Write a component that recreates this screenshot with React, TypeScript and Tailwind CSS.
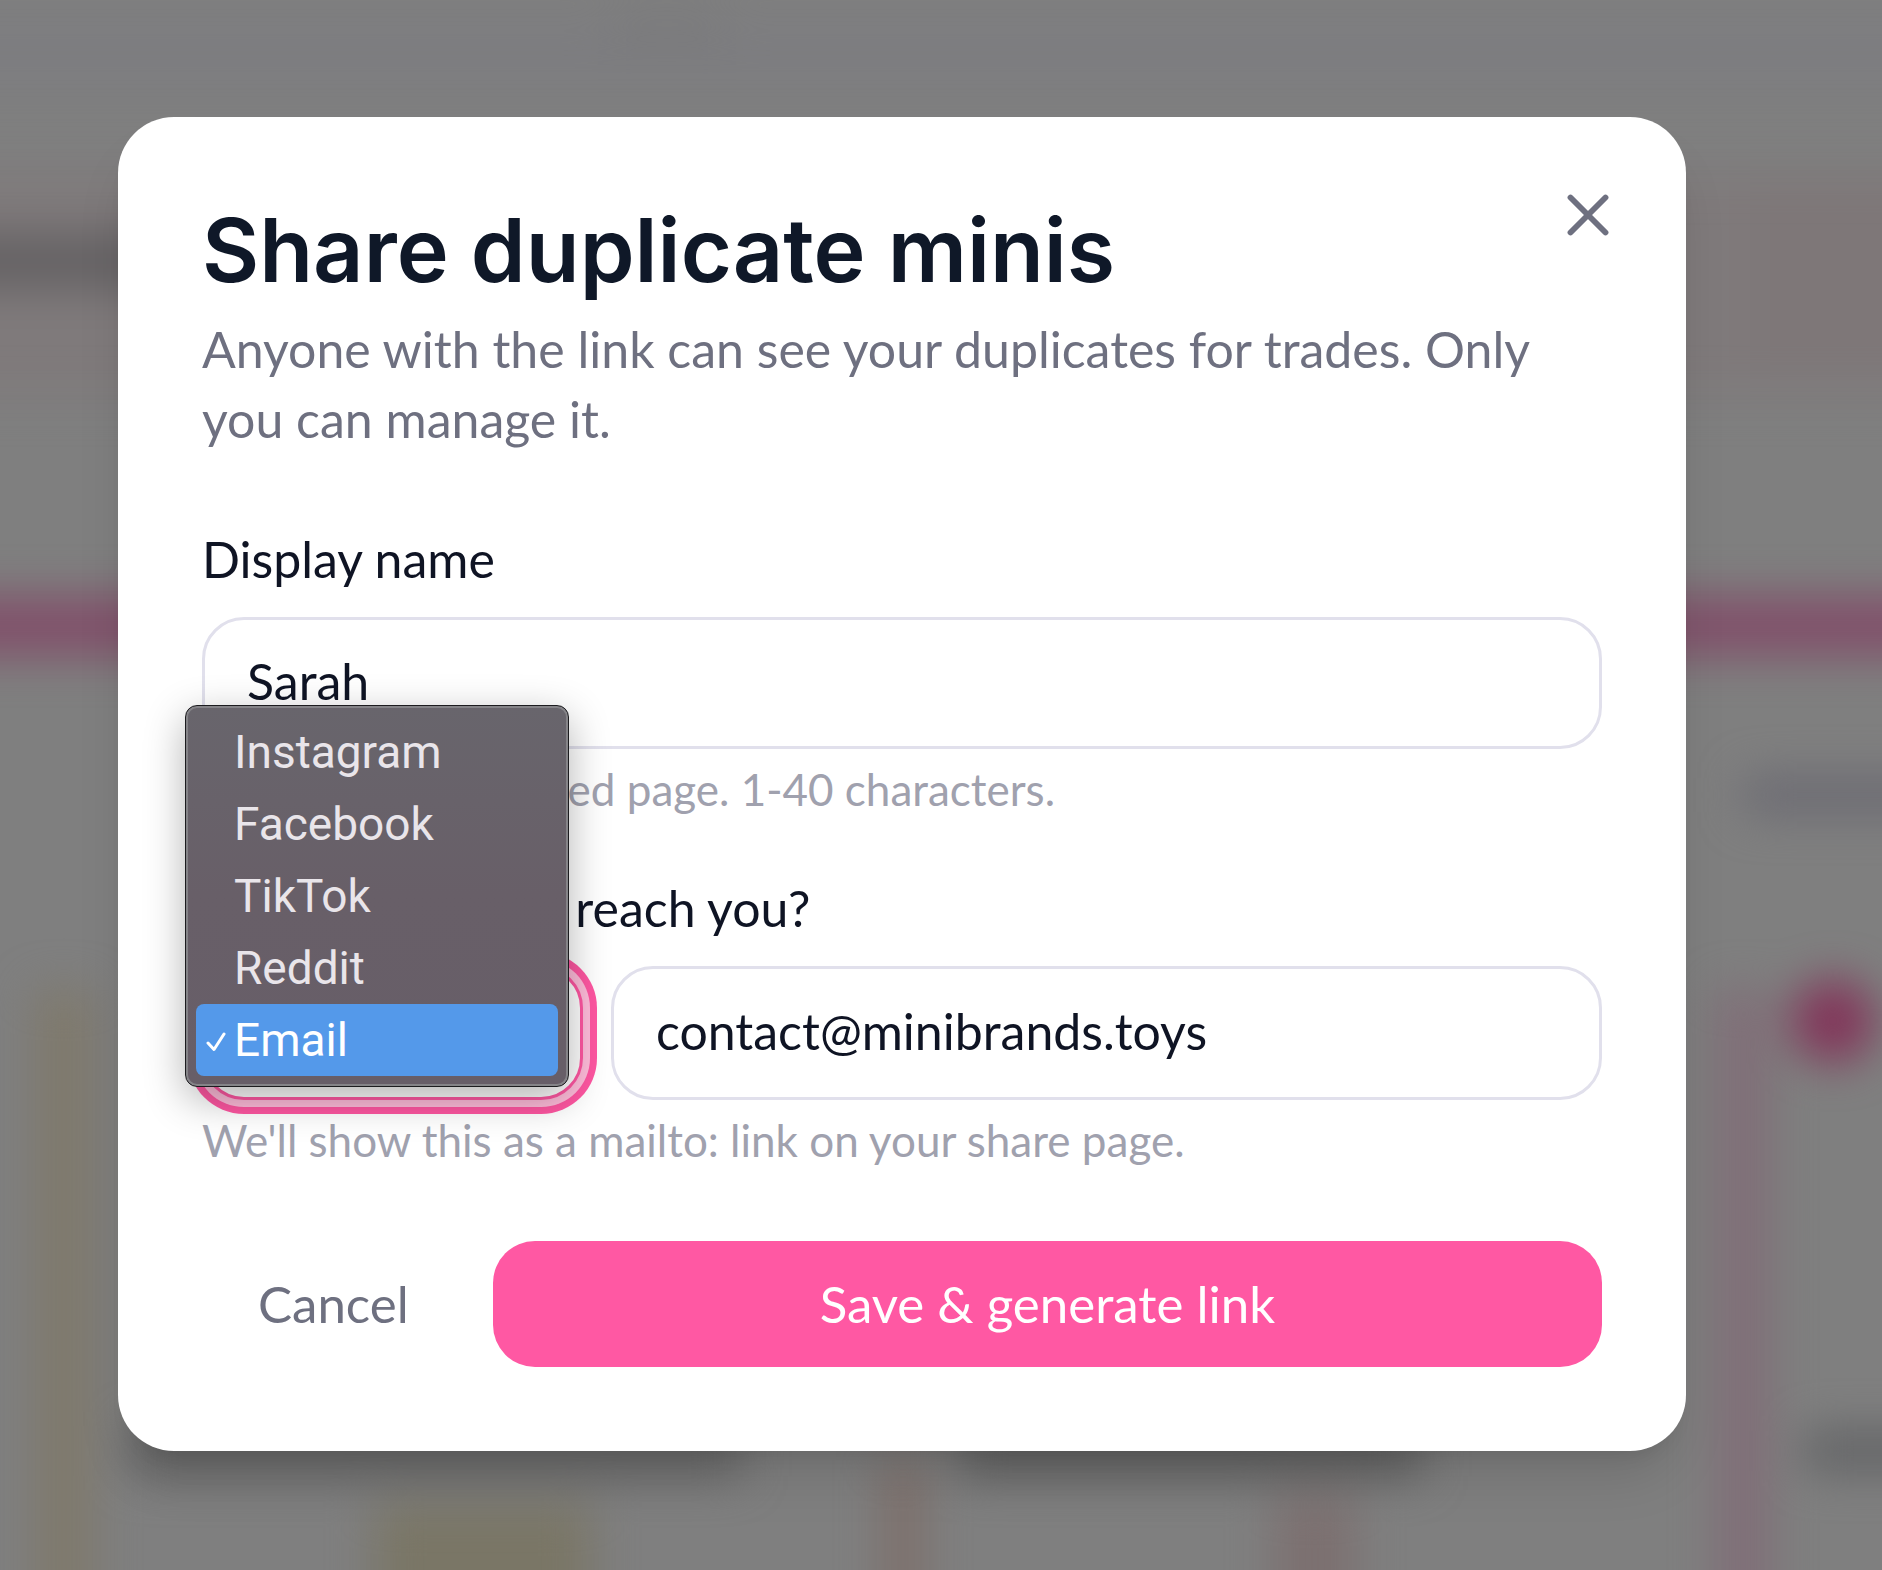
import { useState } from "react";
import { X } from "lucide-react";

const CONTACT_TYPES = ["Instagram", "Facebook", "TikTok", "Reddit", "Email"];

function Backdrop() {
    return (
        <svg
            aria-hidden="true"
            className="absolute inset-0 h-full w-full"
            viewBox="0 0 1882 1570"
            preserveAspectRatio="xMidYMid slice"
        >
            <defs>
                <filter id="soft" filterUnits="userSpaceOnUse" x="-200" y="-200" width="2300" height="2000" colorInterpolationFilters="sRGB">
                    <feGaussianBlur stdDeviation="22" />
                </filter>
            </defs>
            <rect width="1882" height="1570" fill="#7f7f7f" />
            <g filter="url(#soft)">
                <rect x="-180" y="18" width="2250" height="70" fill="#7d7d80" />
                <rect x="612" y="12" width="110" height="40" fill="#7b7b7d" />

                {/* header card */}
                <rect x="-180" y="175" width="2250" height="220" fill="#7f7a7b" />
                <rect x="1750" y="180" width="300" height="190" fill="#7e7778" />
                <rect x="-180" y="234" width="360" height="54" fill="#646163" />

                {/* progress bar */}
                <rect x="-180" y="596" width="2250" height="60" fill="#81506a" />

                {/* card row */}
                <rect x="1745" y="776" width="300" height="38" fill="#6b6a72" />
                <rect x="36" y="990" width="56" height="700" fill="#7f796b" />
                <rect x="1718" y="990" width="50" height="700" fill="#806d77" />
                <circle cx="1833" cy="1021" r="42" fill="#82365a" />
                <rect x="1805" y="1430" width="260" height="42" fill="#636466" />
                <rect x="130" y="1426" width="610" height="50" fill="#666666" />
                <rect x="960" y="1426" width="460" height="50" fill="#606060" />
                <rect x="375" y="1504" width="215" height="150" fill="#7a7666" />
                <rect x="884" y="1460" width="38" height="200" fill="#7d6e69" />
                <rect x="1275" y="1496" width="80" height="150" fill="#7c7070" />
            </g>
        </svg>
    );
}

function ContactMenu({ value, onSelect }: { value: string; onSelect: (v: string) => void }) {
    return (
        <ul
            role="listbox"
            aria-label="Contact type"
            className="absolute bottom-[13px] -left-[17px] z-10 w-96 rounded-xl border border-[#1c1c1f] bg-linear-to-b from-[#68656c] via-[#685f68] to-[#675e68] p-[10px] font-['Roboto',sans-serif] text-[46px] text-[#e9e5ea] shadow-[inset_0_0_0_2px_#858488,0_12px_40px_rgba(0,0,0,0.3)]"
        >
            {CONTACT_TYPES.map((type) => (
                <li key={type} role="option" aria-selected={type === value}>
                    <button
                        type="button"
                        onClick={() => onSelect(type)}
                        className={
                            type === value
                                ? "flex h-[72px] w-full items-center rounded-lg bg-[#5499ea] pl-[10px] text-left text-white"
                                : "flex h-[72px] w-full items-center pl-[10px] text-left"
                        }
                    >
                        <span className="flex w-7 shrink-0">
                            {type === value && (
                                <svg viewBox="0 0 20 20" className="mt-1 h-5 w-5" fill="none" stroke="currentColor" strokeWidth="3" strokeLinecap="round" strokeLinejoin="round" aria-hidden="true">
                                    <path d="M2 11 L8 17.5 L18 2" />
                                </svg>
                            )}
                        </span>
                        {type}
                    </button>
                </li>
            ))}
        </ul>
    );
}

export default function App() {
    const [name, setName] = useState("Sarah");
    const [type, setType] = useState("Email");
    const [contact, setContact] = useState("contact@minibrands.toys");

    return (
        <main className="relative min-h-screen overflow-hidden pt-[117px] pr-[196px] pb-[119px] pl-[118px] font-['Lato',sans-serif] text-[50px] leading-[70px] text-[#0f1424]">
            <Backdrop />

            <div
                role="dialog"
                aria-labelledby="share-title"
                className="relative rounded-[56px] bg-white p-[84px] shadow-[0_35px_52px_-10px_rgba(0,0,0,0.12),0_14px_21px_-14px_rgba(0,0,0,0.12)]"
            >
                <button type="button" aria-label="Close" className="absolute top-[63px] right-[63px] text-[#6e7080]">
                    <X size={70} strokeWidth={2} />
                </button>

                <h2 id="share-title" className="font-['Inter',sans-serif] text-[88px] leading-[99px] font-semibold text-[#0f1828]">
                    Share duplicate minis
                </h2>
                <p className="mt-[14px] text-[#6e7080]">
                    Anyone with the link can see your duplicates for trades. Only you can manage it.
                </p>

                <form className="mt-[70px]" onSubmit={(e) => e.preventDefault()}>
                    <label htmlFor="display-name" className="block">Display name</label>
                    <input
                        id="display-name"
                        value={name}
                        onChange={(e) => setName(e.target.value)}
                        className="mt-[23px] block h-[132px] w-full rounded-[42px] border-[3px] border-[#e1e0ec] bg-white px-[42px] pb-1 outline-none"
                    />
                    <p className="mt-3 text-[44px] leading-[56px] text-[#a0a1ae]">
                        Shown on this shared page. 1-40 characters.
                    </p>

                    <label htmlFor="contact" className="mt-[56px] block">How can traders reach you?</label>
                    <div className="mt-[23px] flex gap-7">
                        <div className="relative w-[381px] shrink-0">
                            <select
                                aria-label="Contact type"
                                value={type}
                                onChange={(e) => setType(e.target.value)}
                                className="block h-[134px] w-full appearance-none rounded-[42px] border-[3px] border-[#ff57a2] bg-white px-[39px] outline-none ring-7 ring-[#ffbcda] shadow-[0_0_0_14px_#ff57a2]"
                            >
                                {CONTACT_TYPES.map((t) => (
                                    <option key={t}>{t}</option>
                                ))}
                            </select>
                            <ContactMenu value={type} onSelect={setType} />
                        </div>
                        <input
                            id="contact"
                            value={contact}
                            onChange={(e) => setContact(e.target.value)}
                            className="block h-[134px] min-w-0 flex-1 rounded-[42px] border-[3px] border-[#e1e0ec] bg-white px-[42px] pb-1 outline-none"
                        />
                    </div>
                    <p className="mt-3 text-[44px] leading-[56px] text-[#a0a1ae]">
                        We'll show this as a mailto: link on your share page.
                    </p>

                    <div className="mt-[73px] flex gap-7 text-[51px]">
                        <button type="button" className="h-[126px] rounded-[42px] px-[56px] text-[#6e7080]">
                            Cancel
                        </button>
                        <button type="submit" className="h-[126px] flex-1 rounded-[42px] bg-[#ff58a3] text-white">
                            Save &amp; generate link
                        </button>
                    </div>
                </form>
            </div>
        </main>
    );
}
